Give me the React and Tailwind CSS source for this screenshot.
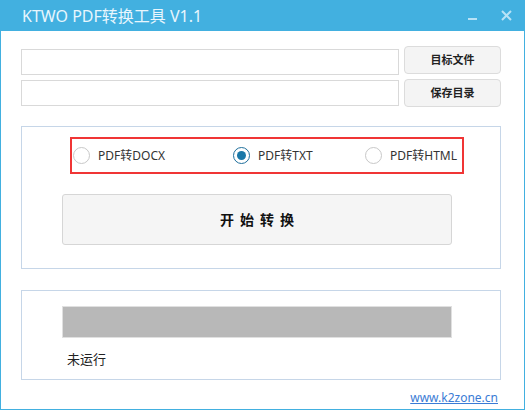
import React, { useState } from 'react';

const font = { fontFamily: '"Microsoft YaHei", "Noto Sans", "Noto Sans CJK SC", sans-serif' };

const Radio = ({ checked, label, onClick, className }) => (
  <button onClick={onClick} className={`flex items-center gap-[8px] text-[12px] text-[#333] ${className}`}>
    <span
      className={`flex h-[17px] w-[17px] items-center justify-center rounded-full border bg-white ${
        checked ? 'border-[#1f6f9c]' : 'border-[#c8c8c8]'
      }`}
    >
      {checked && <span className="h-[9px] w-[9px] rounded-full bg-[#1a78a8]" />}
    </span>
    <span>{label}</span>
  </button>
);

export default function App() {
  const [mode, setMode] = useState('txt');

  return (
    <div className="flex h-[410px] w-[525px] flex-col bg-white" style={font}>
      {/* Title bar */}
      <div className="flex h-[31px] shrink-0 items-center bg-[#42b0e0] pl-[22px] pr-[13px]">
        <span className="text-[16px] text-[#e8f6fd]">KTWO PDF转换工具 V1.1</span>
        <div className="ml-auto flex items-center gap-[24px]">
          <span className="mt-[6px] block h-[2px] w-[9px] bg-[#b8e2f6]" />
          <svg width="11" height="11" viewBox="0 0 11 11">
            <path d="M1 1 L10 10 M10 1 L1 10" stroke="#b8e2f6" strokeWidth="2" />
          </svg>
        </div>
      </div>

      {/* Body */}
      <div className="flex flex-1 flex-col border-x border-b border-[#42b0e0] px-[20px]">
        <div className="mt-[15px] mr-[3px] flex gap-[5px]">
          <div className="flex flex-1 flex-col gap-[5px] pt-[3px]">
            <input className="h-[26px] w-full border border-[#d9d9d9] bg-white outline-none" />
            <input className="h-[26px] w-full border border-[#d9d9d9] bg-white outline-none" />
          </div>
          <div className="flex w-[97px] flex-col gap-[5px]">
            <button className="h-[28px] rounded-[4px] border border-[#dcdcdc] bg-[#f4f4f4] text-[11px] font-bold text-[#222]">
              目标文件
            </button>
            <button className="h-[28px] rounded-[4px] border border-[#dcdcdc] bg-[#f4f4f4] text-[11px] font-bold text-[#222]">
              保存目录
            </button>
          </div>
        </div>

        {/* Options group */}
        <div className="mt-[19px] mr-[3px] flex h-[143px] flex-col items-start border border-[#c6d6e8] pt-[10px]">
          <div className="ml-[48px] flex h-[37px] w-[394px] items-center border-2 border-[#f03535] pl-[1px]">
            <Radio className="w-[160px]" checked={mode === 'docx'} label="PDF转DOCX" onClick={() => setMode('docx')} />
            <Radio className="w-[132px]" checked={mode === 'txt'} label="PDF转TXT" onClick={() => setMode('txt')} />
            <Radio checked={mode === 'html'} label="PDF转HTML" onClick={() => setMode('html')} />
          </div>
          <button className="mt-[20px] ml-[40px] h-[51px] w-[390px] rounded-[3px] border border-[#d6d6d6] bg-[#f5f5f5] pl-[6px] text-[14px] font-bold tracking-[6px] text-[#111]">
            开始转换
          </button>
        </div>

        {/* Status group */}
        <div className="mt-[21px] mr-[3px] flex h-[90px] flex-col border border-[#c6d6e8] pl-[40px] pt-[15px]">
          <div className="h-[32px] w-[390px] border border-[#e0e0e0] bg-[#b8b8b8]" />
          <div className="mt-[12px] pl-[5px] text-[13px] text-[#222]">未运行</div>
        </div>

        <div className="mt-[9px] flex justify-end pr-[6px]">
          <a href="#" className="text-[12px] text-[#3a7bd5] underline">
            www.k2zone.cn
          </a>
        </div>
      </div>
    </div>
  );
}
